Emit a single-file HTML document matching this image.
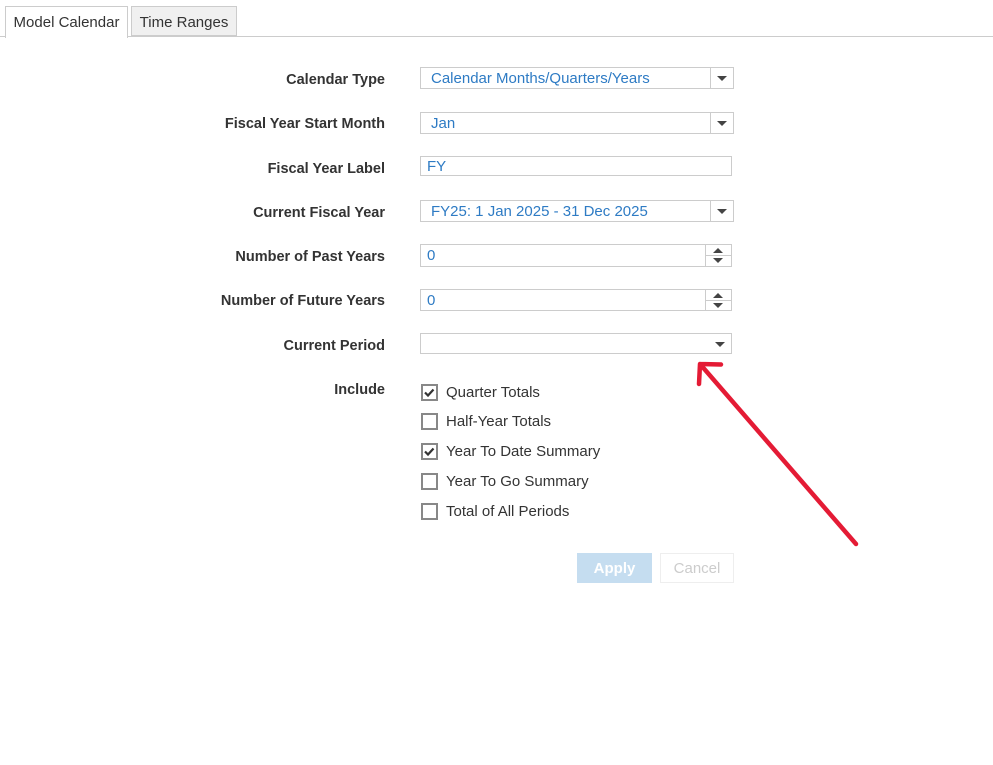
<!DOCTYPE html>
<html><head><meta charset="utf-8"><style>
body{margin:0;width:993px;height:765px;background:#fff;font-family:"Liberation Sans",Arial,sans-serif;position:relative;overflow:hidden;color:#333}
.a{position:absolute}
.tab{position:absolute;top:6px;height:30px;line-height:31px;font-size:15px;border:1px solid #ccc;box-sizing:border-box;color:#333;white-space:nowrap;text-align:center}
.lbl{position:absolute;right:608px;font-weight:bold;font-size:14.5px;color:#333;white-space:nowrap}
.box{position:absolute;left:420px;border:1px solid #ccc;box-sizing:border-box;height:22px;font-size:15px;color:#2e7bc4;line-height:21px;white-space:nowrap}
.dd{position:absolute;right:0;top:0;bottom:0;width:22px;border-left:1px solid #ccc}
.tri{position:absolute;width:0;height:0;border-left:5px solid transparent;border-right:5px solid transparent;border-top:5px solid #444}
.cb{position:absolute;left:421px;width:17px;height:17px;border:2px solid #888;box-sizing:border-box;background:#fff}
.ct{position:absolute;left:446px;font-size:15px;color:#333;white-space:nowrap}
</style></head><body>
<div class="a" style="left:0;top:36px;width:993px;height:1px;background:#ccc"></div>
<div class="tab" style="left:5px;width:123px;height:32px;border-bottom:none;background:#fff">Model Calendar</div>
<div class="tab" style="left:131px;width:106px;background:#f0f0f0">Time Ranges</div>

<div class="lbl" style="top:72px">Calendar Type</div>
<div class="lbl" style="top:116px">Fiscal Year Start Month</div>
<div class="lbl" style="top:161px">Fiscal Year Label</div>
<div class="lbl" style="top:205px">Current Fiscal Year</div>
<div class="lbl" style="top:249px">Number of Past Years</div>
<div class="lbl" style="top:293px">Number of Future Years</div>
<div class="lbl" style="top:338px">Current Period</div>
<div class="lbl" style="top:382px">Include</div>

<div class="box" style="top:67px;width:314px;padding-left:10px">Calendar Months/Quarters/Years<div class="dd"><div class="tri" style="left:6px;top:8px"></div></div></div>
<div class="box" style="top:112px;width:314px;padding-left:10px">Jan<div class="dd"><div class="tri" style="left:6px;top:8px"></div></div></div>
<div class="box" style="top:156px;width:312px;height:20px;padding-left:6px;line-height:20px">FY</div>
<div class="box" style="top:200px;width:314px;padding-left:10px">FY25: 1 Jan 2025 - 31 Dec 2025<div class="dd"><div class="tri" style="left:6px;top:8px"></div></div></div>
<div class="box" style="top:244px;width:312px;height:23px;padding-left:6px;line-height:22px">0<div class="dd" style="width:25px"><div class="a" style="left:0;right:0;top:10px;height:1px;background:#ccc"></div><div class="tri" style="left:7px;top:3px;border-top:none;border-bottom:5px solid #444"></div><div class="tri" style="left:7px;top:13px"></div></div></div>
<div class="box" style="top:289px;width:312px;height:22px;padding-left:6px;line-height:21px">0<div class="dd" style="width:25px"><div class="a" style="left:0;right:0;top:10px;height:1px;background:#ccc"></div><div class="tri" style="left:7px;top:3px;border-top:none;border-bottom:5px solid #444"></div><div class="tri" style="left:7px;top:13px"></div></div></div>
<div class="box" style="top:333px;width:312px;height:21px"><div class="tri" style="right:6px;top:8px"></div></div>

<div class="cb" style="top:384px"></div><div class="ct" style="top:384px">Quarter Totals</div>
<div class="cb" style="top:413px"></div><div class="ct" style="top:413px">Half-Year Totals</div>
<div class="cb" style="top:443px"></div><div class="ct" style="top:443px">Year To Date Summary</div>
<div class="cb" style="top:473px"></div><div class="ct" style="top:473px">Year To Go Summary</div>
<div class="cb" style="top:503px"></div><div class="ct" style="top:503px">Total of All Periods</div>

<svg class="a" style="left:0;top:0" width="993" height="765">
<path d="M425 392.5l3 3 5.5-6M425 451.5l3 3 5.5-6" stroke="#333" stroke-width="2.2" fill="none"/>
<path d="M856 544L700 364M700 364L721 364.5M700 364L699 384" stroke="#e41b35" stroke-width="4.5" stroke-linecap="round" fill="none"/>
</svg>

<div class="a" style="left:577px;top:553px;width:75px;height:30px;background:#c5ddf0;color:#fff;font-size:15px;font-weight:bold;text-align:center;line-height:31px">Apply</div>
<div class="a" style="left:660px;top:553px;width:74px;height:30px;border:1px solid #eee;box-sizing:border-box;color:#ccc;font-size:15px;text-align:center;line-height:29px">Cancel</div>
</body></html>
